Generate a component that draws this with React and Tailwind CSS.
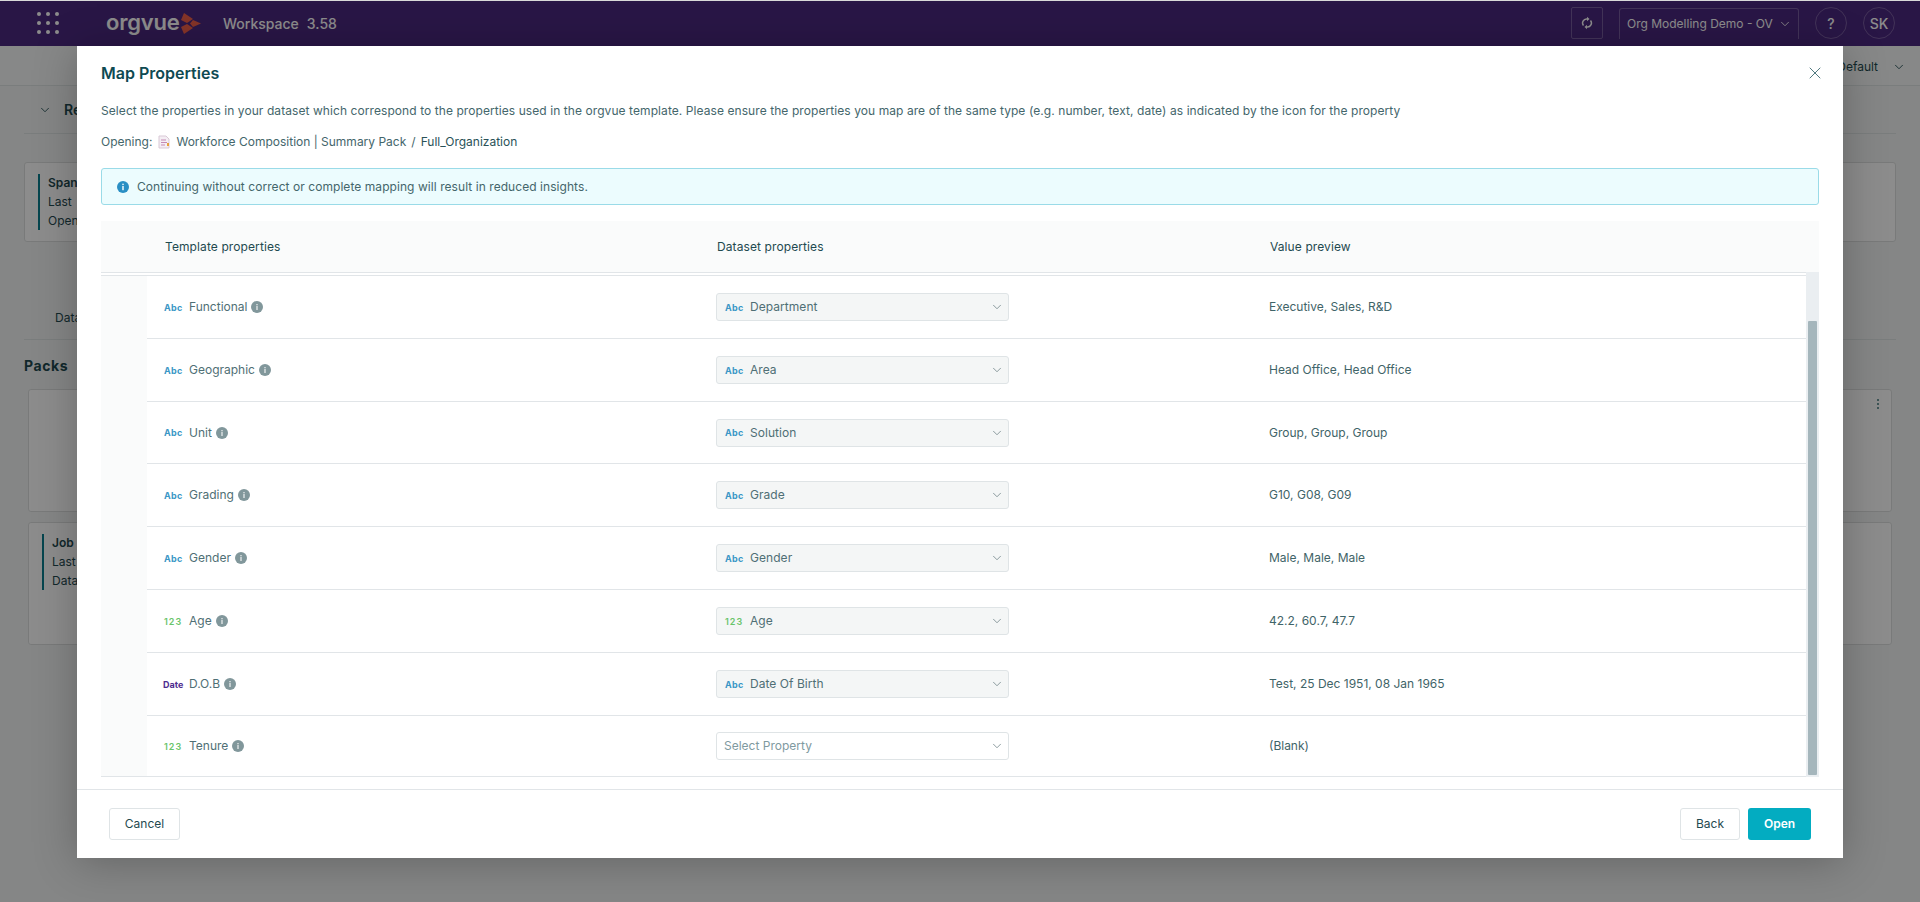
import React from 'react';
import { ChevronDown, X } from 'lucide-react';

const rows = [
    { type: 'Abc', name: 'Functional', mapped: 'Department', mappedType: 'Abc', preview: 'Executive, Sales, R&D', h: 'h-[63px]' },
    { type: 'Abc', name: 'Geographic', mapped: 'Area', mappedType: 'Abc', preview: 'Head Office, Head Office', h: 'h-[63px]' },
    { type: 'Abc', name: 'Unit', mapped: 'Solution', mappedType: 'Abc', preview: 'Group, Group, Group', h: 'h-[62px]' },
    { type: 'Abc', name: 'Grading', mapped: 'Grade', mappedType: 'Abc', preview: 'G10, G08, G09', h: 'h-[63px]' },
    { type: 'Abc', name: 'Gender', mapped: 'Gender', mappedType: 'Abc', preview: 'Male, Male, Male', h: 'h-[63px]' },
    { type: '123', name: 'Age', mapped: 'Age', mappedType: '123', preview: '42.2, 60.7, 47.7', h: 'h-[63px]' },
    { type: 'Date', name: 'D.O.B', mapped: 'Date Of Birth', mappedType: 'Abc', preview: 'Test, 25 Dec 1951, 08 Jan 1965', h: 'h-[63px]' },
    { type: '123', name: 'Tenure', mapped: null, mappedType: null, preview: '(Blank)', h: 'h-[61px]' },
];

const TypeBadge = ({ type }) => {
    if (type === 'Abc') return <span className="block leading-none text-[9px] font-bold tracking-[0.3px] text-[#3a97c6]">Abc</span>;
    if (type === '123') return <span className="block leading-none text-[9px] font-semibold tracking-[1px] text-[#69c46b]">123</span>;
    return <span className="block leading-none ml-[-1px] text-[9px] font-bold text-[#4f2d8f]">Date</span>;
};

const InfoDot = ({ className }) => (
    <svg width="12" height="12" viewBox="0 0 12 12" className={className}>
        <circle cx="6" cy="6" r="6" fill="currentColor" />
        <rect x="5.3" y="5" width="1.4" height="4" fill="#fff" opacity="0.75" />
        <rect x="5.3" y="3" width="1.4" height="1.3" fill="#fff" opacity="0.75" />
    </svg>
);

const SyncIcon = () => (
    <svg width="12" height="14" viewBox="0 0 12 14" fill="none" stroke="currentColor" strokeWidth="1.5">
        <path d="M2.500 9.500A4 4 0 0 1 6 3" />
        <path d="M9.500 4.500A4 4 0 0 1 6 11" />
        <polygon points="6,0.800 8.500,3 6,5.200" fill="currentColor" stroke="none" />
        <polygon points="6,8.800 3.500,11 6,13.200" fill="currentColor" stroke="none" />
    </svg>
);

const TopBar = () => (
    <div className="h-[46px] bg-[#4c2880] flex items-center text-white shrink-0">
        <div className="ml-[37px] grid grid-cols-3 gap-[5px]">
            {[0, 1, 2, 3, 4, 5, 6, 7, 8].map((i) => (
                <span key={i} className="w-[4px] h-[4px] rounded-full bg-white" />
            ))}
        </div>
        <div className="ml-[47px] flex items-center">
            <span className="w-[72px] text-[22px] font-semibold tracking-[-0.2px] leading-none pb-[3px]">orgvue</span>
            <svg width="20" height="21" viewBox="0 0 20 21" className="ml-[3px]">
                <polygon points="3,0 12,6 6,10 0,7" fill="#f0604a" />
                <polygon points="12,7 20,10.500 12,14 9,10.500" fill="#f0604a" />
                <polygon points="0,14 6,11 12,15 3,21" fill="#f0604a" />
            </svg>
        </div>
        <span className="ml-[22px] text-[14px] font-medium">Workspace</span>
        <span className="ml-[8px] text-[14px] font-medium">3.58</span>
        <div className="ml-auto flex items-center">
            <div className="w-[32px] h-[32px] border border-white/25 rounded-[2px] flex items-center justify-center">
                <SyncIcon />
            </div>
            <div className="ml-[16px] w-[180px] h-[31px] border border-b-0 border-white/25 rounded-t-[3px] flex items-center pl-[7px] pr-[6px]">
                <span className="text-[12px] whitespace-nowrap">Org Modelling Demo - OV</span>
                <ChevronDown size={14} strokeWidth={1.5} className="ml-auto" />
            </div>
            <div className="ml-[16px] w-[32px] h-[32px] border border-white/25 rounded-full flex items-center justify-center text-[14px] font-medium">?</div>
            <div className="ml-[16px] mr-[25px] w-[32px] h-[32px] border border-white/25 rounded-full flex items-center justify-center text-[14px] font-medium">SK</div>
        </div>
    </div>
);

// Page behind the modal, only the edges of it show
const BackgroundPage = () => (
    <div className="h-full flex flex-col text-[#1f4a50]">
        <TopBar />
        <div className="h-[40px] shrink-0 border-b border-[#dfe3e3] flex items-center justify-end pr-[14px] pt-[2px] text-[12px] bg-[#f6f8f7]">
            <span>Default</span>
            <ChevronDown size={14} strokeWidth={1.5} className="ml-[14px]" />
        </div>
        <div className="px-[24px] flex flex-col">
            <div className="h-[48px] border-b border-[#dfe3e3] flex items-center">
                <ChevronDown size={14} strokeWidth={1.5} className="ml-[14px]" />
                <span className="ml-[12px] text-[14px] font-semibold">Recent</span>
            </div>
            <div className="mt-[28px] h-[80px] border border-[#dcdfdf] rounded-[3px] bg-white flex py-[11px] pl-[13px]">
                <div className="w-[2px] h-[56px] bg-[#0a7f8f]" />
                <div className="ml-[8px] text-[12px] leading-[19px] -mt-[1px]">
                    <div className="font-semibold">Span</div>
                    <div>Last</div>
                    <div>Open</div>
                </div>
            </div>
            <div className="mt-[67px] h-[31px] border-b border-[#dfe3e3] pl-[31px] text-[12px]">Data</div>
            <div className="mt-[15px] text-[14px] font-bold tracking-[0.6px]">Packs</div>
            <div className="mt-[13px] mx-[4px] h-[123px] border border-[#dcdfdf] rounded-[3px] bg-white flex justify-end pr-[12px] pt-[9px]">
                <div className="flex flex-col gap-[2px]">
                    <span className="w-[2px] h-[2px] bg-[#6f9a9c]" />
                    <span className="w-[2px] h-[2px] bg-[#6f9a9c]" />
                    <span className="w-[2px] h-[2px] bg-[#6f9a9c]" />
                </div>
            </div>
            <div className="mt-[10px] mx-[4px] h-[123px] border border-[#dcdfdf] rounded-[3px] bg-white flex py-[11px] pl-[13px]">
                <div className="w-[2px] h-[56px] bg-[#0a7f8f]" />
                <div className="ml-[8px] text-[12px] leading-[19px] -mt-[1px]">
                    <div className="font-semibold">Job</div>
                    <div>Last</div>
                    <div>Data</div>
                </div>
            </div>
        </div>
    </div>
);

const PropertySelect = ({ label, type }) => (
    <div className={`w-[293px] h-[28px] rounded-[3px] border border-[#dfe4e6] flex items-center pr-[4px] ${label ? 'bg-[#f4f6f6] pl-[8px]' : 'bg-white pl-[7px]'}`}>
        {label ? (
            <>
                <span className="w-[25px]"><TypeBadge type={type} /></span>
                <span className="text-[12px] tracking-[0.05px] text-[#4f6f75]">{label}</span>
            </>
        ) : (
            <span className="text-[12px] text-[#7f9a9f]">Select Property</span>
        )}
        <ChevronDown size={14} strokeWidth={1.2} className="ml-auto text-[#5f7478]" />
    </div>
);

const MapRow = ({ row, last }) => (
    <div className={`flex ${row.h} ${last ? 'border-b border-[#e1e5e8]' : ''}`}>
        <div className="w-[46px] bg-[#fafbfb]" />
        <div className={`flex-1 flex items-center ${last ? '' : 'border-b border-[#e1e5e8]'}`}>
            <div className="w-[569px] pl-[17px] flex items-center">
                <span className="w-[25px]"><TypeBadge type={row.type} /></span>
                <span className="text-[12px] text-[#4f6f75]">{row.name}</span>
                <InfoDot className="ml-[4px] text-[#81979b]" />
            </div>
            <div className="w-[553px]"><PropertySelect label={row.mapped} type={row.mappedType} /></div>
            <div className="text-[12px] text-[#3f6468]">{row.preview}</div>
        </div>
    </div>
);

const MapPropertiesModal = () => (
    <div className="absolute left-[77px] top-[46px] w-[1766px] h-[812px] bg-white shadow-[0_4px_40px_rgba(0,0,0,0.25)] flex flex-col">
        <div className="px-[24px] pt-[16px]">
            <div className="flex items-center h-[22px]">
                <h2 className="text-[16px] font-semibold text-[#0f4a52]">Map Properties</h2>
                <X size={20} strokeWidth={1} className="ml-auto mr-[-6px] text-[#2f5f66]" />
            </div>
            <p className="mt-[18px] text-[12px] leading-[18px] tracking-[0.075px] text-[#44666b]">
                Select the properties in your dataset which correspond to the properties used in the orgvue template. Please ensure the properties you map are of the same type (e.g. number, text, date) as indicated by the icon for the property
            </p>
            <div className="mt-[13px] flex items-center h-[18px] text-[12px] text-[#44666b]">
                <span>Opening:</span>
                <svg width="12" height="14" viewBox="0 0 12 14" className="ml-[6px]">
                    <path d="M1 1h7l3 3v9H1z" fill="#f4eef4" stroke="#d9c9d6" />
                    <path d="M3 5h5M3 7.500h6M3 10h4" stroke="#c58ab4" strokeWidth="1" />
                    <rect x="9" y="8" width="2" height="3" fill="#e9a13b" />
                </svg>
                <span className="ml-[6px]">Workforce Composition | Summary Pack</span>
                <span className="mx-[5px]">/</span>
                <span className="text-[#2a5258]">Full_Organization</span>
            </div>
            <div className="mt-[17px] h-[37px] rounded-[3px] border border-[#9adbe8] bg-[#ecfcfe] flex items-center pl-[15px]">
                <svg width="12" height="12" viewBox="0 0 12 12">
                    <circle cx="6" cy="6" r="6" fill="#2a8fc4" />
                    <rect x="5.300" y="5" width="1.400" height="4.200" fill="#fff" />
                    <rect x="5.300" y="2.700" width="1.400" height="1.400" fill="#fff" />
                </svg>
                <span className="ml-[8px] text-[12px] tracking-[0.06px] text-[#44666b]">Continuing without correct or complete mapping will result in reduced insights.</span>
            </div>
            <div className="mt-[16px] h-[51px] bg-[#fafbfb] flex items-center text-[12px] tracking-[0.1px] text-[#1f4a50]">
                <div className="w-[616px] pl-[64px]">Template properties</div>
                <div className="w-[553px]">Dataset properties</div>
                <div>Value preview</div>
            </div>
            <div className="flex">
                <div className="flex-1">
                    <div className="h-[4px] border-t border-b border-[#e1e5e8]" />
                    {rows.map((row, i) => (
                        <MapRow key={row.name} row={row} last={i === rows.length - 1} />
                    ))}
                </div>
                <div className="w-[13px] bg-[#eaeef1] flex flex-col pt-[49px] px-[2px] pb-[2px]">
                    <div className="flex-1 rounded-[1px] bg-[#a5b6bc]" />
                </div>
            </div>
        </div>
        <div className="mt-[12px] border-t border-[#e1e5e8] flex items-start px-[32px] pt-[18px]">
            <button className="w-[71px] h-[32px] rounded-[3px] border border-[#dfe4e6] bg-white text-[12px] text-[#1f4a50]">Cancel</button>
            <button className="ml-auto w-[60px] h-[32px] rounded-[3px] border border-[#dfe4e6] bg-white text-[12px] text-[#1f4a50]">Back</button>
            <button className="ml-[8px] w-[63px] h-[32px] rounded-[3px] bg-[#03acc1] text-[12px] font-semibold text-white">Open</button>
        </div>
    </div>
);

const App = () => {
    return (
        <div className="relative w-full h-[902px] overflow-hidden bg-[#f3f5f4] font-['Inter',sans-serif]">
            <BackgroundPage />
            <div className="absolute inset-0 bg-black/45" />
            <div className="absolute left-0 right-0 top-0 h-px bg-[#d9d9d9]" />
            <MapPropertiesModal />
        </div>
    );
};

export default App;
